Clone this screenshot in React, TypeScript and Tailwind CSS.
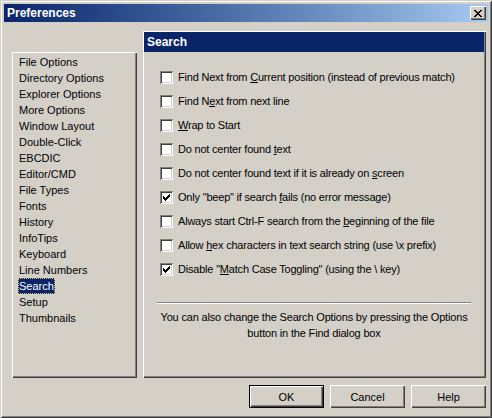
import React from 'react';

const pages = [
  'File Options', 'Directory Options', 'Explorer Options', 'More Options', 'Window Layout',
  'Double-Click', 'EBCDIC', 'Editor/CMD', 'File Types', 'Fonts', 'History', 'InfoTips',
  'Keyboard', 'Line Numbers', 'Search', 'Setup', 'Thumbnails',
];

const options: { label: React.ReactNode; checked: boolean }[] = [
  { label: <>Find Next from <u>C</u>urrent position (instead of previous match)</>, checked: false },
  { label: <>Find N<u>e</u>xt from next line</>, checked: false },
  { label: <><u>W</u>rap to Start</>, checked: false },
  { label: <>Do not center found <u>t</u>ext</>, checked: false },
  { label: <>Do not center found text if it is already on <u>s</u>creen</>, checked: false },
  { label: <>Only "beep" if search <u>f</u>ails (no error message)</>, checked: true },
  { label: <>Always start Ctrl-F search from the <u>b</u>eginning of the file</>, checked: false },
  { label: <>Allow <u>h</u>ex characters in text search string (use \x prefix)</>, checked: false },
  { label: <>Disable "<u>M</u>atch Case Toggling" (using the \ key)</>, checked: true },
];

// classic 7x7 check glyph, row by row
const checkRows = ['......#', '.....##', '#...###', '##.###.', '#####..', '.###...', '..#....'];

const CheckBox = ({ checked }: { checked: boolean }) => (
  <span className="relative inline-block h-[13px] w-[13px] shrink-0 bg-white shadow-[inset_1px_1px_#808080,inset_-1px_-1px_#ffffff,inset_2px_2px_#404040,inset_-2px_-2px_#d4d0c8]">
    {checked && (
      <svg className="absolute left-[3px] top-[3px]" width="7" height="7" shapeRendering="crispEdges">
        {checkRows.map((row, y) =>
          row.split('').map((c, x) =>
            c === '#' ? <rect key={`${x}-${y}`} x={x} y={y} width="1" height="1" fill="#000" /> : null
          )
        )}
      </svg>
    )}
  </span>
);

const Button = ({ children, isDefault }: { children: React.ReactNode; isDefault?: boolean }) => (
  <button
    className={
      isDefault
        ? 'h-[23px] w-[75px] bg-[#d4d0c8] text-black shadow-[inset_1px_1px_#000,inset_-1px_-1px_#000,inset_2px_2px_#ffffff,inset_-2px_-2px_#404040,inset_-3px_-3px_#808080]'
        : 'h-[23px] w-[75px] bg-[#d4d0c8] text-black shadow-[inset_1px_1px_#ffffff,inset_-1px_-1px_#404040,inset_-2px_-2px_#808080]'
    }
  >
    {children}
  </button>
);

export default function App() {
  return (
    <div className="h-[418px] w-[492px] bg-[#d4d0c8] p-[4px] font-['Liberation_Sans',Arial,sans-serif] text-[11px] leading-[16px] text-black shadow-[inset_1px_1px_#d4d0c8,inset_-1px_-1px_#404040,inset_2px_2px_#ffffff,inset_-2px_-2px_#808080]">
      {/* title bar */}
      <div className="flex h-[18px] items-center justify-between bg-gradient-to-r from-[#0a246a] to-[#a6caf0] pl-[3px] pr-[2px]">
        <span className="text-[12px] font-bold text-white">Preferences</span>
        <span className="flex h-[14px] w-[16px] items-center justify-center bg-[#d4d0c8] shadow-[inset_1px_1px_#ffffff,inset_-1px_-1px_#404040,inset_-2px_-2px_#808080]">
          <svg width="8" height="7" viewBox="0 0 8 7" shapeRendering="crispEdges">
            <path d="M0 0h2v1h-2zM6 0h2v1h-2zM1 1h2v1h-2zM5 1h2v1h-2zM2 2h4v1h-4zM3 3h2v1h-2zM2 4h4v1h-4zM1 5h2v1h-2zM5 5h2v1h-2zM0 6h2v1h-2zM6 6h2v1h-2z" fill="#000" />
          </svg>
        </span>
      </div>

      {/* content */}
      <div className="flex pl-[8px] pr-[2px] pt-[9px]">
        {/* page list */}
        <div className="mt-[21px] h-[326px] w-[125px] pl-[6px] pt-[2px] shadow-[inset_1px_1px_#ffffff,inset_-1px_-1px_#404040,inset_-2px_-2px_#808080]">
          {pages.map((p) => (
            <div key={p} className="h-[16px]">
              <span
                className={
                  p === 'Search'
                    ? 'inline-block h-[16px] bg-[#0a246a] px-[1px] text-white outline-1 outline-dotted outline-offset-[-1px] outline-[#e0c060]'
                    : 'inline-block px-[1px]'
                }
              >
                {p}
              </span>
            </div>
          ))}
        </div>

        {/* settings panel */}
        <div className="ml-[6px] flex h-[347px] w-[343px] flex-col pl-[1px] pt-[1px] shadow-[inset_1px_1px_#ffffff,inset_-1px_-1px_#404040,inset_-2px_-2px_#808080]">
          <div className="mr-[2px] flex h-[20px] items-center bg-[#0a246a] pl-[3px] text-[12px] font-bold text-white">
            Search
          </div>
          <div className="pl-[16px] pt-[13px] tracking-[-0.2px]">
            {options.map((o, i) => (
              <div key={i} className="flex h-[24px] items-center gap-[5px]">
                <CheckBox checked={o.checked} />
                <span className="whitespace-nowrap">{o.label}</span>
              </div>
            ))}
          </div>
          <div className="ml-[13px] mr-[15px] mt-[21px] border-t border-b border-t-[#808080] border-b-white" />
          <p className="mr-[2px] mt-[5px] text-center tracking-[-0.17px]">
            You can also change the Search Options by pressing the Options
            <br />
            button in the Find dialog box
          </p>
        </div>
      </div>

      {/* buttons */}
      <div className="mt-[7px] flex justify-end gap-[6px] pr-[2px]">
        <Button isDefault>OK</Button>
        <Button>Cancel</Button>
        <Button>Help</Button>
      </div>
    </div>
  );
}
